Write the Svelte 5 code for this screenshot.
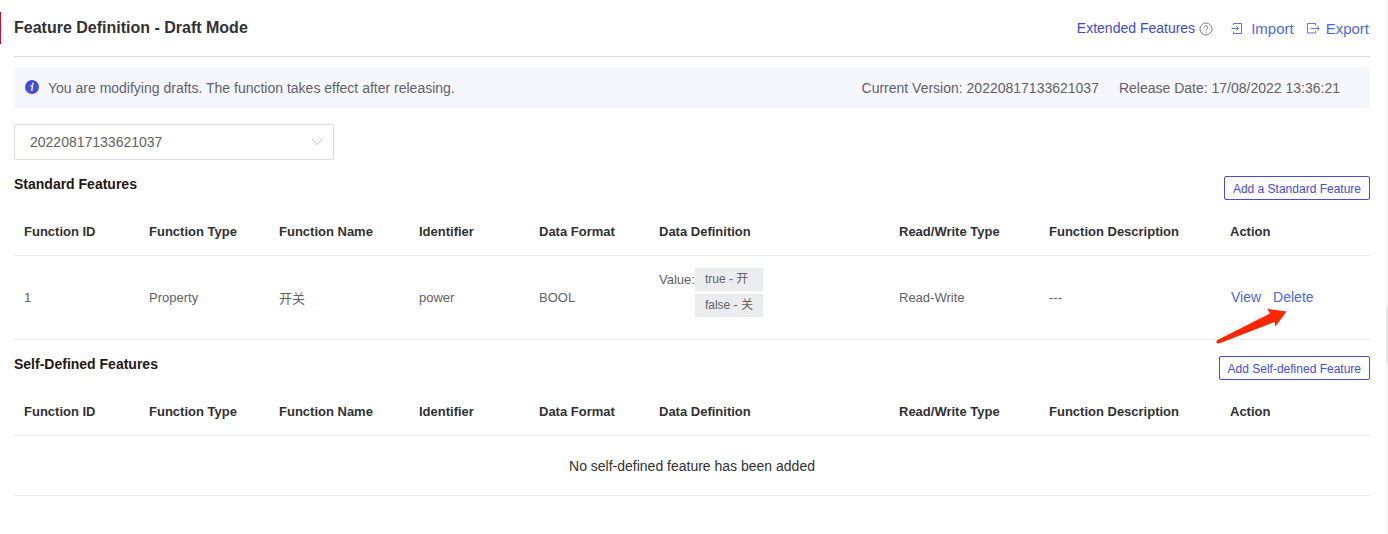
<script>
  const columns = [
    { label: 'Function ID', width: 125 },
    { label: 'Function Type', width: 130 },
    { label: 'Function Name', width: 140 },
    { label: 'Identifier', width: 120 },
    { label: 'Data Format', width: 120 },
    { label: 'Data Definition', width: 240 },
    { label: 'Read/Write Type', width: 150 },
    { label: 'Function Description', width: null },
    { label: 'Action', width: 150 }
  ];
  const version = '20220817133621037';
  const features = [
    {
      id: 1,
      type: 'Property',
      name: '开关',
      identifier: 'power',
      format: 'BOOL',
      values: ['true - 开', 'false - 关'],
      access: 'Read-Write',
      description: '---'
    }
  ];
</script>

{#snippet tableHead()}
  <colgroup>
    {#each columns as c}
      <col style:width={c.width ? `${c.width}px` : null} />
    {/each}
  </colgroup>
  <thead>
    <tr>
      {#each columns as c}
        <th scope="col">{c.label}</th>
      {/each}
    </tr>
  </thead>
{/snippet}

<div class="page">
  <main>
    <header>
      <h1>Feature Definition - Draft Mode</h1>
      <nav>
        <a class="extended" href="#extended">Extended Features</a>
        <svg class="help" width="14" height="14" viewBox="0 0 14 14" fill="none" stroke="#7c7e83">
          <circle cx="7" cy="7" r="6" />
          <path d="M5.2 5.7a1.8 1.8 0 1 1 2.7 1.5c-.6.4-.9.7-.9 1.3" />
          <path d="M7 9.5v1.1" />
        </svg>
        <a class="import" href="#import">
          <svg width="14" height="14" viewBox="0 0 14 14" fill="none" stroke="currentColor" stroke-width=".9">
            <path d="M3.5 4V2.5h8v10h-8V10.5M1.5 7.500H8.500M6.200 5.100l2.500 2.400-2.500 2.400" />
          </svg>
          Import
        </a>
        <a class="export" href="#export">
          <svg width="14" height="14" viewBox="0 0 14 14" fill="none" stroke="currentColor" stroke-width=".9">
            <path d="M9.500 4.500V2.500h-8v9.500h8V10M5 7.500h8M10.800 5.100l2.500 2.400-2.500 2.400" />
          </svg>
          Export
        </a>
      </nav>
    </header>

    <div class="notice">
      <svg width="14" height="14" viewBox="0 0 14 14">
        <circle cx="7" cy="7" r="7" fill="#444edb" />
        <circle cx="7.900" cy="3.700" r="1" fill="#fff" />
        <path d="M5.600 6h2L6.700 10.200h1.100" fill="none" stroke="#fff" stroke-width="1.300" />
      </svg>
      <p>You are modifying drafts. The function takes effect after releasing.</p>
      <span>Current Version: {version}</span>
      <span>Release Date: 17/08/2022 13:36:21</span>
    </div>

    <div class="picker">
      <select aria-label="Version">
        <option>{version}</option>
      </select>
      <svg width="12" height="8" viewBox="0 0 12 8" fill="none" stroke="#c0c4cc">
        <path d="M1 1l5 5.500L11 1" />
      </svg>
    </div>

    <section>
      <div class="bar">
        <h2>Standard Features</h2>
        <button type="button">Add a Standard Feature</button>
      </div>
      <table>
        {@render tableHead()}
        <tbody>
          {#each features as f}
            <tr>
              <td>{f.id}</td>
              <td>{f.type}</td>
              <td>{f.name}</td>
              <td>{f.identifier}</td>
              <td>{f.format}</td>
              <td>
                <div class="definition">
                  <span>Value:</span>
                  <ul>
                    {#each f.values as v}<li>{v}</li>{/each}
                  </ul>
                </div>
              </td>
              <td>{f.access}</td>
              <td>{f.description}</td>
              <td>
                <div class="actions">
                  <a href="#view">View</a>
                  <a href="#delete">Delete</a>
                  <svg class="pointer" width="72" height="36" viewBox="0 0 72 36" fill="#ff2600">
                    <path d="M1.500 32L54 5.500 51.500 1 70.500 3.500 59.500 18.500 58.500 14 3 35.500Q0 36 .5 33Z" />
                  </svg>
                </div>
              </td>
            </tr>
          {/each}
        </tbody>
      </table>
    </section>

    <section>
      <div class="bar">
        <h2>Self-Defined Features</h2>
        <button type="button">Add Self-defined Feature</button>
      </div>
      <table>
        {@render tableHead()}
        <tbody>
          <tr class="empty">
            <td colspan={columns.length}>No self-defined feature has been added</td>
          </tr>
        </tbody>
      </table>
    </section>
  </main>
  <aside><div class="tab"></div></aside>
</div>

<style>
  :global(body) {
    margin: 0;
    background: #fff;
  }
  .page {
    display: flex;
    min-height: 100vh;
    font-family: 'Liberation Sans', Arial, 'Noto Sans CJK SC', sans-serif;
    font-size: 14px;
    color: #606266;
  }
  .page * {
    box-sizing: border-box;
  }
  main {
    flex: 1;
    min-width: 0;
    padding: 0 16px 0 14px;
  }
  aside {
    width: 2px;
    background: #f5f5fb;
    overflow: hidden;
  }
  .tab {
    height: 56px;
    margin-top: 307px;
    border: 1px solid #e6e6e6;
    border-radius: 4px 0 0 4px;
    background: #fff;
  }
  header {
    display: flex;
    align-items: center;
    justify-content: space-between;
    height: 57px;
    border-bottom: 1px solid #dcdce4;
  }
  h1,
  h2,
  p,
  ul {
    margin: 0;
    padding: 0;
  }
  h1 {
    margin-left: -14px;
    padding-left: 13px;
    border-left: 1px solid #c8102e;
    font-size: 16px;
    line-height: 32px;
    color: #303133;
  }
  nav,
  nav a {
    display: flex;
    align-items: center;
  }
  nav {
    padding-right: 1px;
  }
  a {
    color: #4a6bd6;
    text-decoration: none;
  }
  .extended {
    color: #3f48d8;
  }
  .help {
    margin: 2px 0 0 4px;
  }
  .import,
  .export {
    font-size: 15px;
  }
  .import {
    gap: 7px;
    margin-left: 17px;
  }
  .export {
    gap: 6px;
    margin-left: 12px;
  }
  .notice {
    display: flex;
    align-items: center;
    gap: 20px;
    margin-top: 10px;
    padding: 2px 30px 0 11px;
    border-radius: 2px;
    background: #f6f6fe;
    line-height: 39px;
  }
  .notice svg {
    align-self: flex-start;
    margin-top: 11px;
  }
  .notice p {
    flex: 1;
    margin-left: -11px;
  }
  .picker {
    display: grid;
    align-items: center;
    width: 320px;
    margin: 16px 0;
  }
  .picker > * {
    grid-area: 1 / 1;
  }
  .picker svg {
    justify-self: end;
    margin-right: 11px;
    pointer-events: none;
  }
  select {
    appearance: none;
    width: 100%;
    height: 36px;
    padding: 0 30px 0 15px;
    border: 1px solid #dcdce4;
    border-radius: 2px;
    background: #fff;
    color: inherit;
    font: inherit;
  }
  .bar {
    display: flex;
    justify-content: space-between;
  }
  section + section {
    margin-top: 16px;
  }
  h2 {
    font-size: 14px;
    line-height: 16px;
    color: #231815;
  }
  button {
    height: 24px;
    padding: 2px 8px 0;
    border: 1px solid #444edb;
    border-radius: 2px;
    background: #fff;
    color: #444edb;
    font-family: inherit;
    font-size: 12px;
  }
  table {
    width: 100%;
    margin-top: 7px;
    border-collapse: separate;
    border-spacing: 0;
    table-layout: fixed;
    font-size: 13px;
  }
  th,
  td {
    padding: 0 10px;
    border-bottom: 1px solid #ebebf2;
    text-align: left;
  }
  th {
    height: 49px;
    color: #303133;
    white-space: nowrap;
  }
  td {
    height: 84px;
  }
  .definition {
    display: flex;
    line-height: 23px;
  }
  ul {
    display: grid;
    gap: 3px;
    margin-bottom: 10px;
    list-style: none;
  }
  li {
    padding: 0 10px;
    background: #ebecee;
    font-size: 12px;
  }
  .actions {
    position: relative;
    display: flex;
    gap: 12px;
    padding: 0 0 2px 1px;
    font-size: 14px;
  }
  .pointer {
    position: absolute;
    top: 19px;
    left: -14px;
  }
  .empty td {
    height: 60px;
    color: #303133;
    font-size: 14px;
    text-align: center;
  }
</style>
